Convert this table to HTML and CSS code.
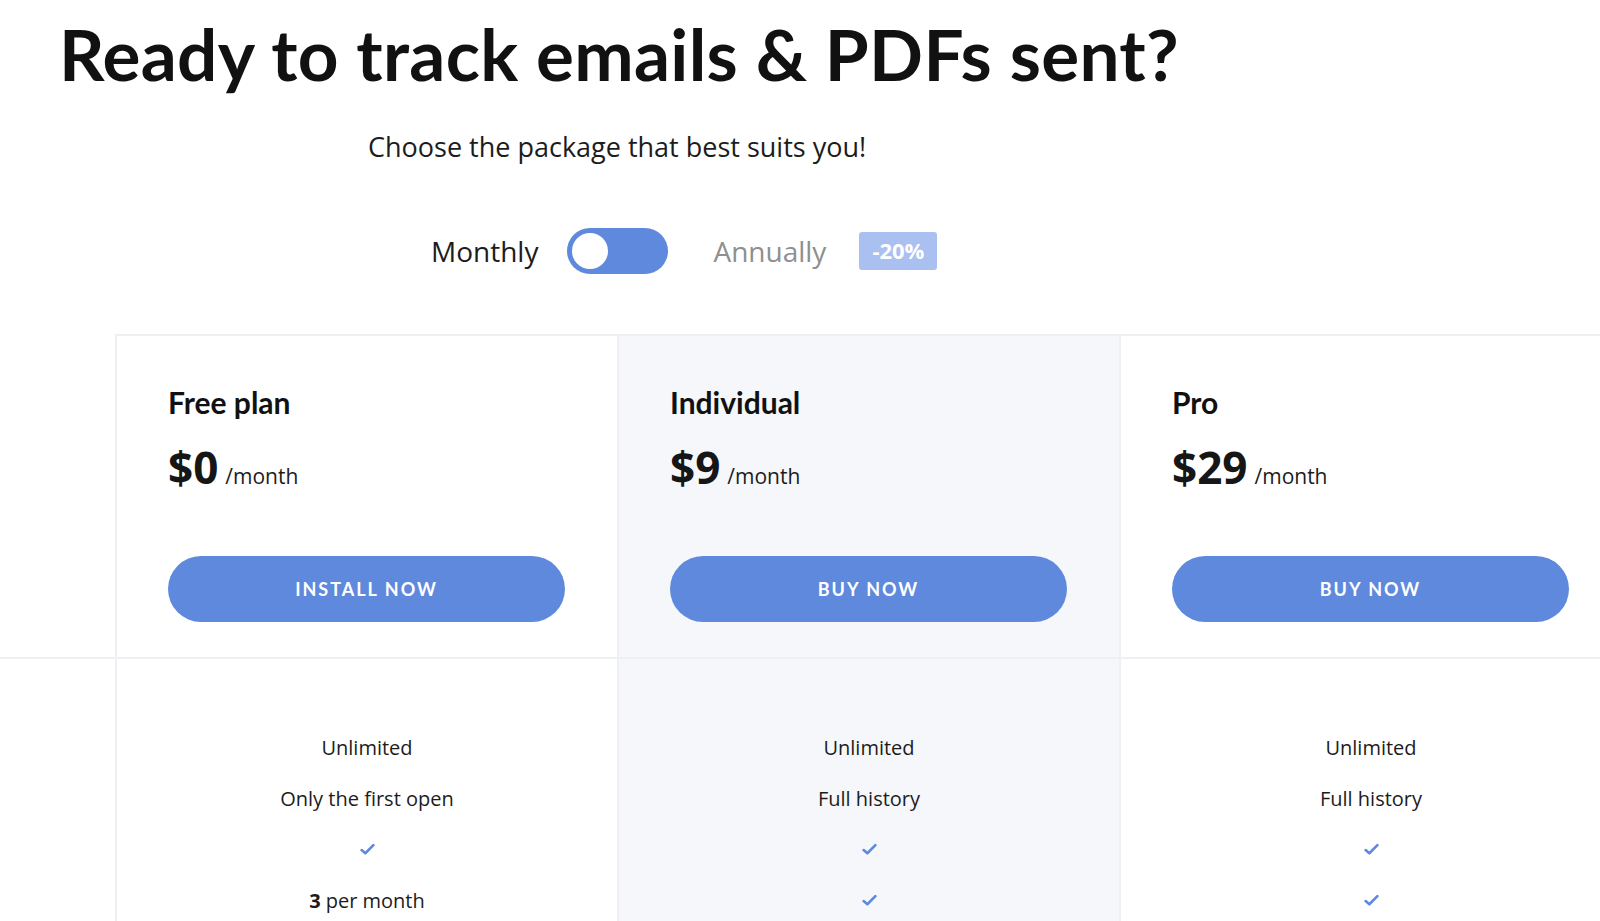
FILE: index.html
```html
<!DOCTYPE html>
<html lang="en">
<head>
<meta charset="utf-8">
<title>Pricing</title>
<link rel="stylesheet" href="styles.css">
</head>
<body>
<div class="page">
  <h1 class="title">Ready to track emails &amp; PDFs sent?</h1>
  <p class="subtitle">Choose the package that best suits you!</p>
  <div class="billing">
    <span class="billing-label active">Monthly</span>
    <span class="switch"><span class="knob"></span></span>
    <span class="billing-label muted">Annually</span>
    <span class="badge">-20%</span>
  </div>

  <div class="table">
    <div class="row head-row">
      <div class="cell label-cell"></div>
      <div class="cell plan">
        <div class="plan-name">Free plan</div>
        <div class="price"><span class="amount">$0</span> <span class="per">/month</span></div>
        <a class="btn">INSTALL NOW</a>
      </div>
      <div class="cell plan alt">
        <div class="plan-name">Individual</div>
        <div class="price"><span class="amount">$9</span> <span class="per">/month</span></div>
        <a class="btn">BUY NOW</a>
      </div>
      <div class="cell plan">
        <div class="plan-name">Pro</div>
        <div class="price"><span class="amount">$29</span> <span class="per">/month</span></div>
        <a class="btn">BUY NOW</a>
      </div>
    </div>
    <div class="row body-row">
      <div class="cell label-cell bare"></div>
      <div class="cell features">
        <div class="feat">Unlimited</div>
        <div class="feat">Only the first open</div>
        <div class="feat"><svg class="check" viewBox="0 0 14 12"><path d="M1.5 6.5 L5 9.5 L12.5 2" fill="none" stroke="#5f89dd" stroke-width="2.4" stroke-linecap="round" stroke-linejoin="round"/></svg></div>
        <div class="feat"><b>3</b> per month</div>
      </div>
      <div class="cell features alt">
        <div class="feat">Unlimited</div>
        <div class="feat">Full history</div>
        <div class="feat"><svg class="check" viewBox="0 0 14 12"><path d="M1.5 6.5 L5 9.5 L12.5 2" fill="none" stroke="#5f89dd" stroke-width="2.4" stroke-linecap="round" stroke-linejoin="round"/></svg></div>
        <div class="feat"><svg class="check" viewBox="0 0 14 12"><path d="M1.5 6.5 L5 9.5 L12.5 2" fill="none" stroke="#5f89dd" stroke-width="2.4" stroke-linecap="round" stroke-linejoin="round"/></svg></div>
      </div>
      <div class="cell features">
        <div class="feat">Unlimited</div>
        <div class="feat">Full history</div>
        <div class="feat"><svg class="check" viewBox="0 0 14 12"><path d="M1.5 6.5 L5 9.5 L12.5 2" fill="none" stroke="#5f89dd" stroke-width="2.4" stroke-linecap="round" stroke-linejoin="round"/></svg></div>
        <div class="feat"><svg class="check" viewBox="0 0 14 12"><path d="M1.5 6.5 L5 9.5 L12.5 2" fill="none" stroke="#5f89dd" stroke-width="2.4" stroke-linecap="round" stroke-linejoin="round"/></svg></div>
      </div>
    </div>
  </div>
</div>
</body>
</html>
```

FILE: styles.css
```css
* { box-sizing: border-box; }
html, body { margin: 0; padding: 0; background: #ffffff; }
body { overflow: hidden; font-family: "Open Sans", "Liberation Sans", sans-serif; color: #1a1a1a; }
.page { width: 1600px; height: 921px; overflow: hidden; }

.title {
  margin: 0;
  padding: 14px 0 0 59px;
  font-family: "Lato", "Liberation Sans", sans-serif;
  font-weight: 700;
  font-size: 71px;
  line-height: 80px;
  color: #111111;
  letter-spacing: 0.3px;
  white-space: nowrap;
}

.subtitle {
  margin: 35px 0 0 368px;
  font-family: "Open Sans", sans-serif;
  font-size: 27px;
  line-height: 36px;
  color: #1c1c1c;
}

.billing {
  display: flex;
  align-items: center;
  margin: 63px 0 0 431px;
  height: 46px;
}
.billing-label { font-size: 28px; line-height: 46px; }
.billing-label.active { color: #1c1c1c; margin-right: 29px; }
.billing-label.muted { color: #8f8f8f; margin-right: 33px; }
.switch {
  width: 101px; height: 46px;
  border-radius: 23px;
  background: #5f89dd;
  display: flex; align-items: center;
  padding-left: 5px;
  margin-right: 45px;
}
.knob { width: 36px; height: 36px; border-radius: 50%; background: #ffffff; }
.badge {
  width: 78px; height: 38px;
  border-radius: 3px;
  background: #a9c0f0;
  color: #ffffff;
  font-weight: 700;
  font-size: 22px;
  display: flex; align-items: center; justify-content: center;
  padding-bottom: 2px;
}

.table { margin-top: 60px; width: 1621px; }
.row { display: grid; grid-template-columns: 115px 502px 502px 502px; }
.head-row .plan { border-top: 2px solid #eff0f4; }
.head-row { border-bottom: 2px solid #eff0f4; }
.cell { border-left: 2px solid #eff0f4; }
.label-cell { border-left: none; }
.alt { background: #f5f7fb; }

.plan { padding: 49px 53px 34px 51px; height: 323px; }
.plan-name {
  font-family: "Lato", sans-serif;
  font-weight: 700;
  font-size: 30px;
  line-height: 34px;
  color: #111111;
}
.price { margin-top: 18px; display: flex; align-items: baseline; height: 56px; }
.amount { font-weight: 700; font-size: 44px; color: #161616; }
.per { font-size: 21px; color: #1c1c1c; margin-left: 7px; }
.btn {
  display: flex; align-items: center; justify-content: center;
  margin-top: 63px;
  width: 397px; height: 66px;
  border-radius: 33px;
  background: #5f89dd;
  color: #ffffff;
  font-family: "Lato", sans-serif;
  font-weight: 700;
  font-size: 18px;
  letter-spacing: 2px;
}

.features { padding-top: 63px; display: flex; flex-direction: column; align-items: center; }
.feat { height: 51px; flex-shrink: 0; display: flex; align-items: center; justify-content: center; font-size: 20px; color: #1c1c1c; }
.feat b { font-weight: 700; margin-right: 5px; }
.check { width: 15px; height: 13px; }
```
